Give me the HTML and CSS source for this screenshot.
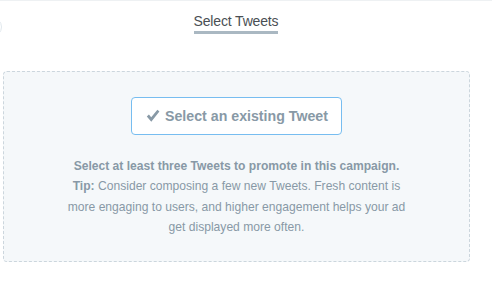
FILE: index.html
```html
<!DOCTYPE html>
<html>
<head>
<meta charset="utf-8">
<link rel="stylesheet" href="styles.css">
</head>
<body>
<div class="page">
  <div class="avatar"></div>
  <div class="header">
    <span class="title">Select Tweets</span>
  </div>
  <div class="dropzone">
    <button class="select-btn"><svg class="check" viewBox="0 0 14 14" width="14" height="14"><path d="M0.8 7.6 L2.9 5.6 L5.2 8.2 L11.4 0.8 L13.4 2.6 L5.3 12.8 Z" fill="#8899a6"/></svg>Select an existing Tweet</button>
    <div class="info">
      <p class="lead">Select at least three Tweets to promote in this campaign.</p>
      <p><b>Tip:</b> Consider composing a few new Tweets. Fresh content is<br>more engaging to users, and higher engagement helps your ad<br>get displayed more often.</p>
    </div>
  </div>
</div>
</body>
</html>
```

FILE: styles.css
```css
html, body {
  margin: 0;
  padding: 0;
  background: #fff;
}
body {
  font-family: "Liberation Sans", Arial, sans-serif;
  width: 492px;
  height: 281px;
  overflow: hidden;
}
.page {
  position: relative;
  border-top: 1px solid #eef1f3;
  height: 280px;
}
.avatar {
  position: absolute;
  left: -18px;
  top: 16px;
  width: 18px;
  height: 18px;
  border: 1px solid #e1e8ed;
  border-radius: 50%;
}
.header {
  display: flex;
  justify-content: center;
  padding-top: 12px;
  padding-right: 20px;
  height: 59px;
  box-sizing: border-box;
}
.title {
  font-size: 14px;
  line-height: 17px;
  color: #4a4f54;
  padding-bottom: 1px;
  border-bottom: 3px solid #aab8c2;
  height: 17px;
  letter-spacing: -0.15px;
}
.dropzone {
  margin: 11px 22px 0 3px;
  height: 191px;
  box-sizing: border-box;
  background: #f5f8fa;
  border: 1px dashed #ccd6dd;
  border-radius: 4px;
  display: flex;
  flex-direction: column;
  align-items: center;
  padding-top: 25px;
}
.select-btn {
  width: 211px;
  height: 38px;
  background: #fff;
  border: 1px solid #77bdf0;
  border-radius: 4px;
  font-family: "Liberation Sans", Arial, sans-serif;
  font-size: 14.2px;
  font-weight: bold;
  color: #8899a6;
  display: flex;
  align-items: center;
  justify-content: center;
  padding: 0 0 0 1px;
}
.check {
  margin-right: 5px;
  margin-top: -1px;
  flex: none;
}
.info {
  margin-top: 21px;
  text-align: center;
  font-size: 12.1px;
  line-height: 20.3px;
  color: #8899a6;
}
.info p {
  margin: 0;
}
.lead {
  font-weight: bold;
}
.info b {
  font-weight: bold;
}
```
